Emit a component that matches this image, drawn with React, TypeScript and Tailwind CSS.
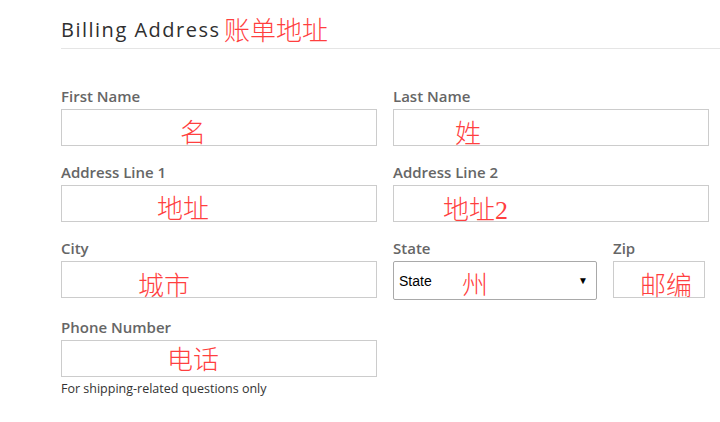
const redNote =
  "absolute whitespace-nowrap text-[26px] leading-none font-light text-[#ff3f3f] [font-family:'Liberation_Serif','Noto_Sans_CJK_SC',serif]";

type FieldProps = {
  label: string;
  note: string;
  noteClass: string;
  className?: string;
};

function Field({ label, note, noteClass, className = "" }: FieldProps) {
  return (
    <div className={className}>
      <p className="text-[15px] leading-5 font-semibold text-[#666]">{label}</p>
      <div className="relative mt-[3px] h-[37px] border border-[#ccc] bg-white">
        <span className={`${redNote} ${noteClass}`}>{note}</span>
      </div>
    </div>
  );
}

export default function App() {
  return (
    <div className="min-h-[422px] bg-white pl-[61px] [font-family:'Open_Sans',sans-serif]">
      <div className="relative border-b border-[#e5e5e5] pt-4 pb-1">
        <h2 className="text-[20px] leading-7 font-medium tracking-[1.5px] text-[#2f2f2f]">
          Billing Address
        </h2>
        <span className={`${redNote} left-[163px] top-[19px]`}>账单地址</span>
      </div>

      <div className="mt-[37px] w-[648px]">
        <div className="grid grid-cols-2 gap-4">
          <Field label="First Name" note="名" noteClass="left-[118px] top-[11px]" />
          <Field label="Last Name" note="姓" noteClass="left-[61px] top-[12px]" />
        </div>

        <div className="mt-4 grid grid-cols-2 gap-4">
          <Field label="Address Line 1" note="地址" noteClass="left-[95px] top-[11px]" />
          <Field label="Address Line 2" note="地址2" noteClass="left-[49px] top-[12px]" />
        </div>

        <div className="mt-4 grid grid-cols-2 gap-4">
          <Field label="City" note="城市" noteClass="left-[76px] top-[12px]" />
          <div className="flex gap-4">
            <div className="w-[204px]">
              <p className="text-[15px] leading-5 font-semibold text-[#666]">State</p>
              <div className="relative mt-[3px] flex h-[39px] items-center justify-between rounded-[2px] border border-[#a9a9a9] bg-white pr-[8px] pl-[5px] [font-family:'Liberation_Sans',sans-serif]">
                <span className="text-sm text-black">State</span>
                <span className="text-[10px] text-black">▼</span>
                <span className={`${redNote} left-[68px] top-[11px]`}>州</span>
              </div>
            </div>
            <Field
              label="Zip"
              note="邮编"
              noteClass="left-[26px] top-[12px]"
              className="w-[92px]"
            />
          </div>
        </div>

        <div className="mt-[17px] grid grid-cols-2 gap-4">
          <div>
            <Field label="Phone Number" note="电话" noteClass="left-[105px] top-[7px]" />
            <p className="mt-[4px] text-[12.5px] leading-4 text-[#333]">
              For shipping-related questions only
            </p>
          </div>
        </div>
      </div>
    </div>
  );
}
